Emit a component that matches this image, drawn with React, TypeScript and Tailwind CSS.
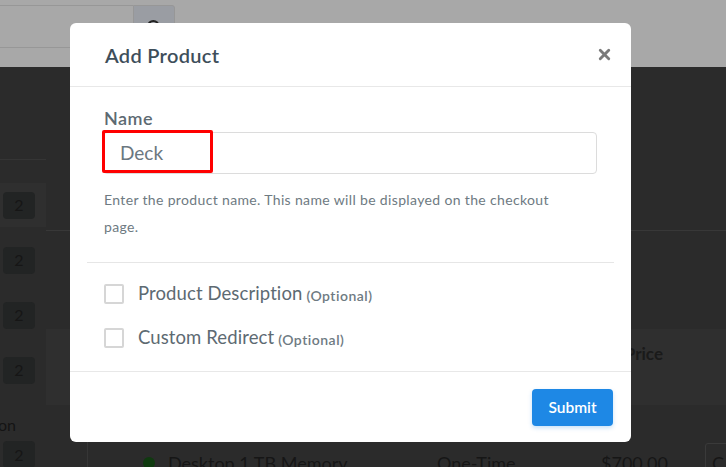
import { X, Search } from 'lucide-react';

const sideBadges = ['a', 'b', 'c', 'd'];

const App = () => {
  return (
    <div className="relative w-[726px] h-[467px] overflow-hidden bg-[#2b2b2b] font-['Lato','Liberation_Sans',sans-serif]">
      {/* Page behind the overlay */}
      <div className="h-[67px] bg-[#a8a8a8] pt-[5px]">
        <div className="flex h-[43px]">
          <div className="w-[133px] border-y border-[#979797] bg-[#a8a8a8]" />
          <div className="w-[42px] flex items-center justify-center border border-[#979797] rounded-r-[3px] bg-[#9a9da3]">
            <Search className="w-4 h-4 text-[#222]" strokeWidth={3} />
          </div>
        </div>
      </div>

      <div className="flex">
        {/* Sidebar */}
        <div className="w-[46px] shrink-0 pt-[92px]">
          <div className="border-t border-[#353535]" />
          <div className="flex flex-col">
            {sideBadges.map((id, i) => (
              <div
                key={id}
                className={
                  i === 0
                    ? 'h-[44px] mt-[23px] flex items-center bg-[#2f2f2f]'
                    : 'h-[44px] mt-[11px] flex items-center'
                }
              >
                <div className="ml-[3px] w-[32px] h-[27px] rounded-[4px] bg-[#222424] text-[#161616] text-[16px] flex items-center justify-center">
                  2
                </div>
              </div>
            ))}
            <div className="mt-[23px] text-[16px] text-[#141414] leading-[20px] -ml-[2px]">on</div>
            <div className="mt-[6px] ml-[3px] w-[32px] h-[27px] rounded-[4px] bg-[#222424] text-[#161616] text-[16px] flex items-center justify-center">
              2
            </div>
          </div>
        </div>

        {/* Main content */}
        <div className="flex-1 min-w-0 flex flex-col">
          <div className="h-[164px] border-b border-[#383838]" />
          <div className="h-[98px]" />
          <div className="h-[76px] bg-[#2f2f2f] flex justify-end pr-[63px] pt-[12px]">
            <span className="text-[17px] font-bold text-[#1a1a1a]">Price</span>
          </div>
          <div className="h-[100px] ml-[41px] border-l border-[#363636] pt-[38px] overflow-hidden">
            <div className="flex items-center h-[40px] text-[18px] text-[#161616] whitespace-nowrap">
              <span className="shrink-0 ml-[55px] w-[12px] h-[12px] rounded-full bg-[#0f3a0f]" />
              <span className="shrink-0 ml-[13px] w-[269px]">Desktop 1 TB Memory</span>
              <span className="shrink-0 w-[164px]">One-Time</span>
              <span className="shrink-0 w-[104px]">$700.00</span>
              <span className="shrink-0 w-[40px] h-[40px] border border-[#3a3a3a] rounded-[3px] pl-[6px] pt-[6px]">C</span>
            </div>
          </div>
        </div>
      </div>

      {/* Modal */}
      <div className="absolute left-[70px] top-[23px] w-[561px] h-[419px] bg-white rounded-[6px] flex flex-col">
        <div className="h-[64px] flex items-center justify-between pl-[35px] pr-[18px] border-b border-[#e8e8e8]">
          <h2 className="text-[20px] font-semibold text-[#3e4e5a] tracking-[0.3px]">Add Product</h2>
          <X className="w-[17px] h-[17px] text-[#7a7a7a]" strokeWidth={4} />
        </div>

        <div className="px-[33px] pt-[20px]">
          <label className="block text-[18px] font-semibold text-[#5d6a72] leading-[22px] pl-[1px] tracking-[0.5px]">Name</label>
          <div className="relative mt-[3px]">
            <div className="h-[42px] w-[494px] border border-[#dcdcdc] rounded-[4px] flex items-center pl-[16px] text-[19px] text-[#6b7880]">
              Deck
            </div>
            <div className="absolute -left-[1px] -top-[2px] w-[111px] h-[43px] border-[3px] border-[#ff0000] rounded-[2px]" />
          </div>
          <p className="mt-[12px] w-[470px] text-[14px] tracking-[0.35px] leading-[27px] text-[#6e7a82] pl-[1px]">
            Enter the product name. This name will be displayed on the checkout page.
          </p>
          <div className="-mx-[16px] mt-[22px] border-t border-[#e6e6e6]" />
          <div className="flex flex-col pt-[21px] gap-[24px]">
            {['Product Description', 'Custom Redirect'].map(label => (
              <div key={label} className="flex items-center h-[20px]">
                <span className="ml-[1px] w-[20px] h-[20px] border-2 border-[#d6d6d6] rounded-[2px]" />
                <span className="ml-[14px] text-[18.5px] tracking-[0.1px] text-[#5d6a72]">{label}</span>
                <span className="ml-[4px] text-[14px] tracking-[0.5px] font-semibold text-[#6e7a82] mt-[2px]">(Optional)</span>
              </div>
            ))}
          </div>
        </div>

        <div className="mt-[23px] border-t border-[#e8e8e8] flex justify-end pt-[17px] pr-[18px]">
          <button className="w-[81px] h-[37px] rounded-[4px] bg-[#1e88e5] text-white text-[15.5px] font-semibold shadow-[0_2px_4px_rgba(30,136,229,0.25)]">
            Submit
          </button>
        </div>
      </div>
    </div>
  );
};

export default App;
